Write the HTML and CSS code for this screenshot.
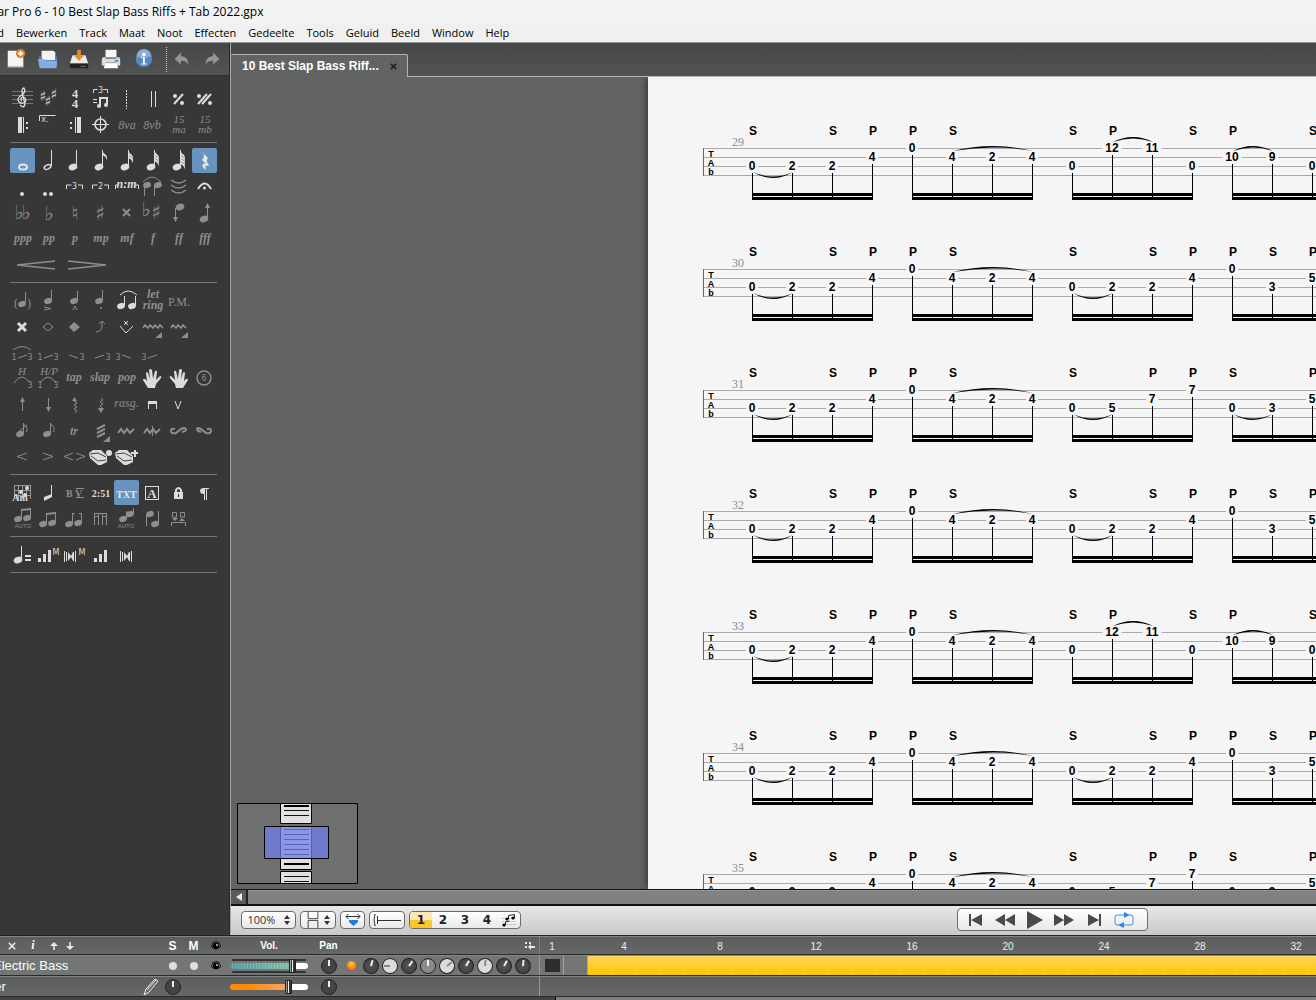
FILE: index.html
```html
<!DOCTYPE html>
<html lang="nl">
<head>
  <meta charset="UTF-8" />
  <meta name="viewport" content="width=device-width, initial-scale=1.0"/>
  <title>Guitar Pro 6 - 10 Best Slap Bass Riffs + Tab 2022.gpx</title>
  <link rel="stylesheet" href="styles.css">
</head>
<body>
  <header class="title-bar">Guitar Pro 6 - 10 Best Slap Bass Riffs + Tab 2022.gpx</header>

  <nav class="menu-bar">
    <a href="#">Bestand</a>
    <a href="#">Bewerken</a>
    <a href="#">Track</a>
    <a href="#">Maat</a>
    <a href="#">Noot</a>
    <a href="#">Effecten</a>
    <a href="#">Gedeelte</a>
    <a href="#">Tools</a>
    <a href="#">Geluid</a>
    <a href="#">Beeld</a>
    <a href="#">Window</a>
    <a href="#">Help</a>
  </nav>

  <main class="workspace">
    <!-- Left side: file toolbar and note palette -->
    <aside class="side">
      <div class="toolbar">
        <button aria-label="New">
          <svg viewBox="0 0 24 24"><path d="M3 3h17v18H3z" fill="#f4f4f4"/><path d="M3 20h17v1H3z" fill="#aaa"/><circle cx="17" cy="6" r="5" fill="#e07b26"/><path d="M17 3v6M14 6h6" stroke="#fff" stroke-width="2"/></svg>
        </button>
        <button aria-label="Open">
          <svg viewBox="0 0 24 24"><path d="M5 3h13l2 2v9H5z" fill="#f2f2f2"/><path d="M2 9h3v4h15V9h2v12H3z" fill="#4f7db8"/><path d="M1 12h7l2 2h12l-1 8H3z" fill="#86ade0"/></svg>
        </button>
        <button aria-label="Save">
          <svg viewBox="0 0 24 24"><path d="M5 8h14l3 9H2z" fill="#ececec"/><path d="M2 17h20v5H2z" fill="#222"/><path d="M14 20h1M16 20h1M18 20h1" stroke="#ddd"/><path d="M10 2h4v6h4l-6 6-6-6h4z" fill="#e88a2e"/></svg>
        </button>
        <button aria-label="Print">
          <svg viewBox="0 0 24 24"><path d="M6 2h12v9H6z" fill="#f7f7f7"/><path d="M3 10h18l1 2v7H2v-7z" fill="#dcdcdc"/><path d="M6 10h12v2H6z" fill="#888"/><path d="M6 16h12l2 6H4z" fill="#fff"/><path d="M6 16h12" stroke="#999"/><path d="M16 14h4" stroke="#3aa0e0" stroke-width="2"/></svg>
        </button>
        <button aria-label="Info">
          <svg viewBox="0 0 24 24"><circle cx="13" cy="12" r="9" fill="#5788bf"/><path d="M5 9a8 8 0 0 1 16 0q-8 4-16 0z" fill="#86aed8"/><circle cx="13" cy="7" r="2" fill="#fff"/><path d="M10 10h4v7h2v1h-6v-1h2v-6h-2z" fill="#fff"/></svg>
        </button>
        <span class="divider"></span>
        <button aria-label="Undo">
          <svg viewBox="0 0 24 24"><path d="M5 12l7-7v4c6 0 8 4 8 9-2-3-4-4-8-4v4z" fill="#949494"/></svg>
        </button>
        <button aria-label="Redo">
          <svg viewBox="0 0 24 24"><path d="M19 12l-7-7v4c-6 0-8 4-8 9 2-3 4-4 8-4v4z" fill="#949494"/></svg>
        </button>
      </div>
      <div class="palette" id="palette"></div>
    </aside>

    <!-- Right side: document tab, score and transport -->
    <section class="document">
      <div class="tabs">
        <div class="tab">10 Best Slap Bass Riff... <button class="tab-close" aria-label="Close"><svg viewBox="0 0 8 8"><path d="M1 1l6 6M7 1l-6 6"/></svg></button></div>
        <div class="tab-rest"></div>
      </div>

      <div class="canvas">
        <div class="sheet" id="score"></div>
        <svg class="navigator" viewBox="0 0 121 81">
          <path d="M.5.5h120v80H.5z" fill="#6f7170" stroke="#000"/>
          <path d="M43.500.5h31v20h-31zM43.500 23.500h31v43h-31zM43.500 68.500h31v12h-31z" fill="#e0e0e0" stroke="#000"/>
          <path d="M47 7.500h25M47 12.500h25M47 26.500h25M47 31.500h25M47 36.500h25M47 41.500h25M47 46.500h25M47 51.500h25M47 73.500h25M47 78.500h25" stroke="#111"/>
          <path d="M47 3h25M47 61h25" stroke="#000" stroke-width="2"/>
          <path d="M27.500 23.500h64v32h-64z" fill="#707de8" fill-opacity=".75" stroke="#000"/>
        </svg>
      </div>

      <div class="scroll">
        <button class="scroll-left" aria-label="Scroll left"><svg viewBox="0 0 8 8"><path d="M7 0v8L1 4z"/></svg></button>
        <div class="scroll-thumb"></div>
      </div>

      <div class="controls">
        <span class="box zoom">
          <select aria-label="Zoom"><option>100%</option><option>150%</option></select>
          <svg class="updown" viewBox="0 0 6 10"><path d="M3 0l3 4H0zM3 10l3-4H0z"/></svg>
        </span>
        <button class="box layout" aria-label="Page layout">
          <svg viewBox="0 0 14 18"><path d="M1.500 0v7.500h11V0M1.500 18V9.500h11V18" fill="none" stroke="#333"/></svg>
          <svg class="updown" viewBox="0 0 6 10"><path d="M3 0l3 4H0zM3 10l3-4H0z"/></svg>
        </button>
        <button class="box fit" aria-label="Fit width">
          <svg viewBox="0 0 16 14"><path d="M1 3.500h14M3.500 1L1 3.500 3.500 6M12.500 1L15 3.500 12.500 6" fill="none" stroke="#333"/><path d="M4 7h9v2l-4.500 4L4 9z" fill="#1a7fe8"/></svg>
        </button>
        <button class="box fret" aria-label="Fretboard">
          <svg viewBox="0 0 30 12"><path d="M4 0H3Q1 6 3 12h1M5.500 2v8M5 6.500h24" fill="none" stroke="#333"/></svg>
        </button>
        <div class="box voices">
          <button class="current">1</button>
          <button>2</button>
          <button>3</button>
          <button>4</button>
          <button aria-label="All voices">
            <svg viewBox="0 0 14 14"><path d="M0 5.500h14M0 8.500h14M0 11.500h14" stroke="#ccc"/><path d="M6.500 6V2.500l6-1V5M3.500 12V9l4-1" fill="none" stroke="#222"/><circle cx="5" cy="6" r="1.600"/><circle cx="11" cy="5" r="1.600"/><circle cx="2" cy="12" r="1.600"/></svg>
          </button>
        </div>
        <div class="box transport">
          <button aria-label="First"><svg viewBox="0 0 20 20"><path d="M4 4h2v12H4zM17 4v12L6 10z"/></svg></button>
          <button aria-label="Rewind"><svg viewBox="0 0 20 20"><path d="M10 4v12L0 10zM20 4v12l-10-6z"/></svg></button>
          <button aria-label="Play"><svg viewBox="0 0 20 20"><path d="M2 1l16 9-16 9z"/></svg></button>
          <button aria-label="Forward"><svg viewBox="0 0 20 20"><path d="M0 4v12l10-6zM10 4v12l10-6z"/></svg></button>
          <button aria-label="Last"><svg viewBox="0 0 20 20"><path d="M17 4h-2v12h2zM4 4v12l11-6z"/></svg></button>
          <button aria-label="Loop"><svg viewBox="0 0 20 20"><path d="M11 5H3q-2 0-2 2v6q0 2 2 2h2M9 15h8q2 0 2-2V7q0-2-2-2h-2" fill="none" stroke="#3d94dc"/><path d="M10 2l6 3-6 3zM10 12l-6 3 6 3z" fill="#2a8ae0"/></svg></button>
        </div>
      </div>
    </section>
  </main>

  <!-- Mixer and timeline -->
  <footer class="mixer">
    <div class="strip head">
      <div class="channel">
        <span class="name head-tools">
          <button aria-label="Add track">+</button>
          <button aria-label="Remove track"><svg viewBox="0 0 10 10"><path d="M1 1l8 8M9 1L1 9" stroke="#e8e8e8" stroke-width="2"/></svg></button>
          <button aria-label="Track info" class="info">i</button>
          <button aria-label="Move up"><svg viewBox="0 0 10 10"><path d="M5 0l5 5H6v5H4V5H0z" fill="#e8e8e8"/></svg></button>
          <button aria-label="Move down"><svg viewBox="0 0 10 10"><path d="M5 10l5-5H6V0H4v5H0z" fill="#e8e8e8"/></svg></button>
        </span>
        <b class="slot sm">S</b>
        <b class="slot sm">M</b>
        <span class="slot eye-slot"><svg class="eye" viewBox="0 0 12 10"><path d="M1 5q5-6 10 0-5 6-10 0zM2 2q4-3 8 0" fill="none" stroke="#111"/><circle cx="6" cy="5" r="3"/><circle cx="7" cy="4" r="1" fill="#ccc"/></svg></span>
        <b class="volume">Vol.</b>
        <b class="pan">Pan</b>
        <svg class="view" viewBox="0 0 12 8"><path d="M1 0h2v2H1zM5 0h2v2H5zM1 4h2v2H1zM4 5l3-3v2h4v2H7v2z" fill="#e8e8e8"/></svg>
      </div>
      <div class="timeline" id="ruler"></div>
    </div>

    <div class="strip selected">
      <div class="channel">
        <span class="name electric">Electric Bass</span>
        <span class="slot"><input type="checkbox" aria-label="Solo"></span>
        <span class="slot"><input type="checkbox" aria-label="Mute"></span>
        <span class="slot eye-slot"><svg class="eye" viewBox="0 0 12 10"><path d="M1 5q5-6 10 0-5 6-10 0zM2 2q4-3 8 0" fill="none" stroke="#111"/><circle cx="6" cy="5" r="3"/><circle cx="7" cy="4" r="1" fill="#ccc"/></svg></span>
        <span class="volume"><input type="range" class="green" aria-label="Volume" value="83"></span>
        <span class="pan"><button class="knob" aria-label="Pan"></button></span>
        <span class="led"></span>
        <span class="effects" id="effects"></span>
      </div>
      <div class="timeline" id="blocks"></div>
    </div>

    <div class="strip">
      <div class="channel">
        <span class="name master">Master</span>
        <svg class="pencil" viewBox="0 0 16 18"><path d="M1 17l2-6L12 1l3 2-9 11zM4 12l9-10" fill="none" stroke="#eee"/></svg>
        <span class="slot"><button class="knob" aria-label="Tuning"></button></span>
        <span class="slot"></span>
        <span class="slot eye-slot"></span>
        <span class="volume"><input type="range" class="orange" aria-label="Master volume" value="78"></span>
        <span class="pan"><button class="knob" aria-label="Master pan"></button></span>
      </div>
      <div class="timeline"></div>
    </div>
    <div class="mixer-scroll"><div class="mixer-thumb"></div></div>
  </footer>

  <script src="script.js"></script>
</body>
</html>
```
FILE: styles.css
```css
* {
  box-sizing: border-box;
}

body {
  margin: 0;
  height: 100vh;
  display: flex;
  flex-direction: column;
  overflow: hidden;
  background: #373737;
  color: #000;
  font-family: "Liberation Sans", Arial, sans-serif;
  font-size: 12px;
}

button {
  display: flex;
  align-items: center;
  justify-content: center;
  padding: 0;
  border: 0;
  background: none;
  color: inherit;
  font: inherit;
}

svg {
  display: block;
}

/* window title and menu */
.title-bar {
  height: 24px;
  flex: none;
  margin-left: -26px;
  background: #f3f3f3;
  font-family: "Open Sans", sans-serif;
  font-size: 12px;
  line-height: 24px;
  white-space: nowrap;
}

.menu-bar {
  display: flex;
  gap: 12px;
  height: 19px;
  flex: none;
  padding-left: 3px;
  background: #f0f0f0;
  border-bottom: 1px solid #8f9190;
  font-family: "Open Sans", sans-serif;
  font-size: 11px;
  line-height: 18px;
}

.menu-bar a {
  color: #000;
  text-decoration: none;
}

.menu-bar a:first-child {
  margin-left: -41px;
}

.workspace {
  flex: 1;
  min-height: 0;
  display: flex;
}

/* left side */
.side {
  width: 230px;
  flex: none;
  background: #373737;
  border-right: 1px solid #2a2a2a;
}

.toolbar {
  display: flex;
  align-items: center;
  height: 33px;
  background: linear-gradient(#464847, #525453);
  border-bottom: 1px solid #333;
}

.toolbar button {
  width: 32px;
}

.toolbar svg {
  width: 22px;
  height: 22px;
}

.divider {
  height: 25px;
  margin-left: 7px;
  margin-right: -1px;
  border-left: 1px dotted #ccc;
}

.palette {
  padding: 5px 12px 0 10px;
}

.group {
  padding: 5px 0 4px;
  border-bottom: 1px solid #777;
}

.row {
  display: flex;
  height: 26px;
}

.tool {
  width: 26px;
  height: 26px;
  flex: none;
  border-radius: 2px;
  color: #8e8e8e;
}

.tool svg {
  width: 26px;
  height: 26px;
  flex: none;
  overflow: visible;
  fill: currentColor;
}

.tool.wide,
.tool.wide svg {
  width: 52px;
}

.tool.lit {
  color: #dcdcdc;
}

.tool.active {
  width: 25px;
  height: 25px;
  margin-right: 1px;
  color: #e6e6e6;
  background: #6893bf;
}

.line {
  fill: none;
  stroke: currentColor;
  stroke-width: 1;
}

.bold-line {
  fill: none;
  stroke: currentColor;
  stroke-width: 2;
}

.tool text {
  text-anchor: middle;
  font-family: "Liberation Serif", serif;
}

.tool .tiny {
  font-family: "DejaVu Sans", sans-serif;
  font-size: 8px;
}

.tool .auto {
  font-family: "Liberation Sans", sans-serif;
  font-size: 6px;
}

.tool .term {
  font-size: 12px;
  font-style: italic;
}

.tool .stack {
  font-size: 11px;
  font-style: italic;
}

.tool .dyn {
  font-size: 12px;
  font-style: italic;
  font-weight: bold;
}

.tool .plain {
  font-size: 12px;
}

.tool .serif {
  font-size: 10px;
  font-weight: bold;
}

.tool .meter {
  font-size: 13px;
  font-weight: bold;
}

.tool .sign {
  font-family: "DejaVu Sans", sans-serif;
  font-size: 20px;
}

.tool .sign.small {
  font-size: 14px;
  font-weight: bold;
}

/* document */
.document {
  flex: 1;
  min-width: 0;
  display: flex;
  flex-direction: column;
  border-left: 1px solid #a8aaa9;
}

.tabs {
  display: flex;
  height: 34px;
  padding-top: 11px;
  background: linear-gradient(#464847, #525453);
  flex: none;
}

.tab {
  display: flex;
  align-items: center;
  gap: 11px;
  width: 177px;
  padding-left: 11px;
  border: 1px solid #b4b6b5;
  border-width: 1px 1px 0 0;
  border-radius: 2px 2px 0 0;
  background: #626463;
  color: #fff;
  font-weight: bold;
  white-space: nowrap;
}

.tab-rest {
  flex: 1;
  border-bottom: 1px solid #b4b6b5;
}

.tab-close svg {
  width: 7px;
  height: 7px;
  stroke: #222;
  stroke-width: 2;
}

.canvas {
  position: relative;
  flex: 1;
  min-height: 0;
  overflow: hidden;
  background: #626463;
}

.sheet {
  height: 100%;
  margin-left: 417px;
  padding: 41px 0 0 55px;
  overflow: hidden;
  background: #f5f5f5;
  box-shadow: 0 0 8px #222;
}

.system {
  width: 100%;
  height: 121px;
  overflow: visible;
}

.staff {
  stroke: #aaa;
}

.edge {
  stroke: #666;
}

.stem {
  stroke: #000;
}

.gap {
  fill: #f5f5f5;
}

.fret-number,
.finger {
  font-family: "Liberation Sans", Arial, sans-serif;
  font-size: 12px;
  font-weight: bold;
  text-anchor: middle;
}

.tab-sign {
  font-size: 9px;
  font-weight: bold;
  text-anchor: middle;
}

.bar-number {
  font-family: "Liberation Serif", serif;
  font-size: 12px;
  text-anchor: end;
  fill: #8c8c8c;
}

.bar-number.here {
  fill: #7482ae;
}

.navigator {
  position: absolute;
  left: 6px;
  bottom: 5px;
  width: 121px;
  height: 81px;
}

.scroll {
  display: flex;
  height: 17px;
  flex: none;
  border: 1px solid #111;
  border-width: 1px 0 2px;
  background: #4e504f;
}

.scroll-left {
  width: 17px;
  border-right: 2px solid #222;
  background: #5a5c5b;
}

.scroll-left svg {
  width: 8px;
  height: 8px;
  fill: #eee;
}

.scroll-thumb {
  flex: 1;
  background: #808281;
  border-top: 1px solid #959796;
}

.controls {
  display: flex;
  align-items: center;
  gap: 4px;
  height: 29px;
  flex: none;
  padding: 0 0 2px 10px;
  background: linear-gradient(#e8e8e8, #c8c8c8);
}

.box {
  display: flex;
  align-items: center;
  justify-content: center;
  height: 18px;
  border: 1px solid #6c6c6c;
  border-radius: 4px;
  background: linear-gradient(#fff, #e8e8e8);
}

.updown {
  width: 6px;
  height: 10px;
  fill: #333;
}

.zoom {
  width: 55px;
  gap: 4px;
}

.zoom select {
  appearance: none;
  width: 32px;
  padding: 0;
  border: 0;
  background: none;
  color: #333;
  font-family: "Open Sans", sans-serif;
  font-size: 11px;
  line-height: 14px;
}

.layout {
  width: 36px;
  gap: 4px;
}

.layout svg:first-child {
  width: 14px;
  height: 16px;
}

.fit {
  width: 25px;
}

.fit svg {
  width: 16px;
  height: 14px;
}

.fret {
  width: 36px;
}

.fret svg {
  width: 30px;
  height: 12px;
}

.voices {
  width: 112px;
  overflow: hidden;
}

.voices button {
  flex: 1;
  height: 100%;
  color: #222;
  font-family: "DejaVu Sans", sans-serif;
  font-size: 12px;
  font-weight: bold;
}

.voices .current {
  background: linear-gradient(#fde6b8 50%, #fdc52c 50%);
}

.voices svg {
  width: 14px;
  height: 14px;
}

.transport {
  width: 191px;
  height: 23px;
  margin-left: 432px;
  padding: 0 8px 0 2px;
}

.transport button {
  flex: 1;
}

.transport svg {
  width: 20px;
  height: 20px;
  fill: #4a4a4a;
}

/* mixer */
.mixer {
  flex: none;
  background: #3c3c3c;
  border-top: 1px solid #222;
}

.strip {
  display: flex;
  height: 21px;
  border-top: 1px solid #858585;
  border-bottom: 1px solid #2a2a2a;
  background: linear-gradient(#5c5e5d, #666867);
}

.strip.head {
  height: 19px;
}

.strip.selected {
  background: #747675;
}

.channel {
  display: flex;
  align-items: center;
  width: 540px;
  flex: none;
  border-right: 1px solid #999;
  color: #fff;
}

.head .channel {
  border-right-style: dotted;
  font-size: 10px;
}

.name {
  width: 162px;
  flex: none;
  font-size: 12px;
  white-space: nowrap;
}

.electric {
  font-size: 13px;
  text-indent: -7px;
}

.master {
  width: 143px;
  font-size: 13px;
  text-indent: -34px;
}

.head-tools {
  display: flex;
  align-items: center;
  gap: 6px;
  padding-right: 80px;
  margin-left: -9px;
  width: 171px;
}

.head-tools button {
  width: 10px;
}

.head-tools .info {
  width: 20px;
  font-family: "Liberation Serif", serif;
  font-style: italic;
  font-weight: bold;
}

.head-tools svg {
  width: 8px;
  height: 8px;
}

.slot {
  display: flex;
  justify-content: center;
  width: 21px;
  flex: none;
}

.eye-slot {
  width: 24px;
}

.sm {
  font-size: 12px;
}

.eye {
  width: 12px;
  height: 10px;
}

.pencil {
  width: 16px;
  height: 18px;
  margin-right: 3px;
}

.volume {
  display: flex;
  justify-content: center;
  width: 82px;
  flex: none;
}

.pan {
  display: flex;
  justify-content: center;
  width: 37px;
  flex: none;
}

.view {
  width: 12px;
  height: 8px;
  margin-left: auto;
  margin-right: 3px;
}

input[type="checkbox"] {
  appearance: none;
  width: 8px;
  height: 8px;
  margin: 0;
  border-radius: 50%;
  background: #dedede;
}

input[type="range"] {
  appearance: none;
  width: 78px;
  height: 6px;
  margin: 0;
  border-radius: 3px;
}

input[type="range"]::-webkit-slider-thumb {
  appearance: none;
  width: 7px;
  height: 14px;
  border: 1px solid #222;
  border-radius: 1px;
  background: linear-gradient(90deg, #999 1px, #333 1px, #333 2px, #eee 2px, #eee 3px, #333 3px);
}

.green {
  background: repeating-linear-gradient(90deg, transparent 0 2px, #ffffff33 2px 3px), linear-gradient(90deg, #4f98a0, #7cbfa2 80%, #fff 80%);
  box-shadow: 0 -6px 0 -2px #333, 0 6px 0 -2px #333;
}

.orange {
  background: linear-gradient(90deg, #ff8a00 20%, #f5a56a 76%, #fff 76%);
}

.knob {
  width: 16px;
  height: 16px;
  border: 1px solid #222;
  border-radius: 50%;
  background: #444;
  transform: rotate(var(--turn, 0deg));
}

.knob::after {
  content: "";
  width: 2px;
  height: 6px;
  margin-bottom: 6px;
  background: #eee;
}

.effects .knob {
  background: radial-gradient(#555, #3c3c3c);
}

.effects .knob.white {
  background: #dcdcdc;
}

.effects .knob.white::after {
  background: #888;
}

.effects .knob.gray {
  background: #8a8a8a;
}

.led {
  width: 9px;
  height: 9px;
  margin-right: 7px;
  border-radius: 50%;
  background: radial-gradient(circle at 50% 30%, #ffc040, #f06000);
}

.effects {
  display: flex;
  gap: 3px;
}

.timeline {
  display: flex;
  flex: 1;
  min-width: 0;
  overflow: hidden;
}

.measure {
  width: 24px;
  flex: none;
  color: #eee;
  font-size: 10px;
  line-height: 19px;
  text-align: center;
}

.block {
  width: 24px;
  flex: none;
  border-right: 1px solid #dfcf98;
  background: linear-gradient(#fbd75c, #fcc600);
}

.block.empty {
  border-right-color: #a2a2a2;
  background: none;
}

.block.first::before {
  content: "";
  display: block;
  width: 15px;
  height: 13px;
  margin: 3px 0 0 5px;
  background: #2c2c2c;
}

.mixer-scroll {
  height: 3px;
  padding-left: 555px;
  background: #444;
}

.mixer-thumb {
  height: 3px;
  background: #808080;
  border-left: 1px solid #000;
}
```
FILE: script.js
```javascript
// ---------- palette icons (26 x 26 grid) ----------
const line = (d) => `<path class="line" d="${d}"/>`;
const bold = (d) => `<path class="bold-line" d="${d}"/>`;
const fill = (d) => `<path d="${d}"/>`;
const text = (x, y, s, cls) => `<text x="${x}" y="${y}" class="${cls}">${s}</text>`;
const dot = (x, y, r = 1.5) => `<circle cx="${x}" cy="${y}" r="${r}"/>`;
const head = (x, y) => `<ellipse cx="${x}" cy="${y}" rx="4.4" ry="3.2" transform="rotate(-20 ${x} ${y})"/>`;
const small = (x, y) => `<ellipse cx="${x}" cy="${y}" rx="4" ry="3" transform="rotate(-20 ${x} ${y})"/>`;

function note(x, y, length, flags = 0) {
  let out = head(x, y) + line(`M${x + 3.5} ${y - 1}V${y - length}`);
  for (let i = 0; i < flags; i++) {
    const top = y - length + i * 3;
    out += fill(`M${x + 3} ${top}q1 3 4 5q2 3 0 5q1-3-4-5z`);
  }
  return out;
}

const smallNote = (x, y, length) => small(x, y) + line(`M${x + 3.5} ${y - 1}V${y - length}`);
const beamed = (x, y) => small(x, y) + small(x + 9, y - 1) + line(`M${x + 3.5} ${y}v-10M${x + 12.5} ${y - 1}v-10`);
const tuplet = (s) => line("M4.500 15v-4h5M16 11h4.500v4") + text(12.5, 15, s, "tiny");
const hand = fill("M8 22l-5-8q0-2 2-1l2 2-1-8q1-2 2 0l2 6-1-9q1-2 3 0l1 9 2-8q2-1 2 1l-1 8 4-4q2 0 1 2l-5 6-1 4z");
const corner = fill("M22 18v6h-7z");
const pedal = fill("M1 9l4-3h8l6 6v6l-6 3h-3L2 14z") + `<path d="M2 10l8-1 8 4M3 12l7 5 8-1" fill="none" stroke="#444"/>`;
const bars = fill("M6 18h3v4H6zM11 14h3v8h-3zM16 10h3v12h-3z");
const tuner = line("M6.500 9v11M8.500 10v9M17.500 9v11M15.500 10v9") + fill("M10 10l3 4 2-4v9l-2-4-3 4z");
const zig = (x, n) => `<path d="M${x} 14${"l2-3l3 3".repeat(n)}" fill="none" stroke="currentColor" stroke-width="1.5"/>`;

const groups = [
  [
    [
      ["Clef", "lit", `<path d="M2 5.500h21M2 9.500h21M2 13.500h21M2 17.500h21" stroke="#777"/>` + `<path d="M10 19q4 4 5-1L12 6q0-4 2-4q2 3-1 6q-5 3-5 6q1 4 6 3q3-2 1-5q-3-2-4 1q0 2 1 2" fill="none" stroke="currentColor" stroke-width="1.300"/>`],
      ["Key signature", "lit", text(7, 15, "♯", "sign small") + text(12, 20, "♯", "sign small") + text(18, 13, "♯", "sign small")],
      ["Time signature", "lit", text(13, 12, "4", "meter") + text(13, 22, "4", "meter")],
      ["Triplet feel", "lit", line("M5.500 7V3.500h4M15 3.500h4.500V7M5 13.500h4M5 16.500h4") + text(12.5, 7, "3", "tiny") + bold("M12 20v-8h7v7") + dot(11, 20, 2) + dot(18, 19, 2)],
      ["Free time", "lit", `<path d="M12.500 4v19" stroke="currentColor" stroke-dasharray="2 1"/>`],
      ["Double bar", "lit", line("M11.500 5v16M15.500 5v16")],
      ["Simile", "lit", bold("M8 18l9-10") + dot(9, 10, 2) + dot(16, 17, 2)],
      ["Double simile", "lit", bold("M6 18l9-10M10 18l9-10") + dot(7, 10, 2) + dot(18, 17, 2)]
    ],
    [
      ["Repeat open", "lit", fill("M8 5h4v16H8zM13 5h1v16h-1zM16 10h2v2h-2zM16 15h2v2h-2z")],
      ["Alternate ending", "lit", line("M3.500 9V3.500h16") + text(9, 10, "x.", "tiny")],
      ["Repeat close", "lit", fill("M8 10h2v2H8zM8 15h2v2H8zM13 5h1v16h-1zM15 5h4v16h-4z")],
      ["Coda", "lit", `<circle cx="12.500" cy="12.500" r="5.500" fill="none" stroke="currentColor" stroke-width="1.600"/>` + line("M12.500 4v17M4 12.500h17")],
      ["8va", "", text(13, 17, "8va", "term")],
      ["8vb", "", text(12, 17, "8vb", "term")],
      ["15ma", "", text(13, 11, "15", "stack") + text(13, 21, "ma", "stack")],
      ["15mb", "", text(13, 11, "15", "stack") + text(13, 21, "mb", "stack")]
    ]
  ],
  [
    [
      ["Whole", "active", `<ellipse cx="13" cy="19" rx="4" ry="2.500" fill="none" stroke="currentColor" stroke-width="2"/>`],
      ["Half", "lit", `<ellipse cx="11.500" cy="19" rx="3.500" ry="2" fill="none" stroke="currentColor" stroke-width="1.500" transform="rotate(-25 11.500 19)"/>` + line("M15.500 18V2")],
      ["Quarter", "lit", note(11, 19, 17)],
      ["Eighth", "lit", note(11, 19, 17, 1)],
      ["Sixteenth", "lit", note(11, 19, 17, 2)],
      ["Thirty-second", "lit", note(11, 19, 17, 3)],
      ["Sixty-fourth", "lit", note(11, 19, 17, 4)],
      ["Rest", "active", fill("M10 4l6 6q-3 3 1 7l-1 1q-4-2-2 4q-5-3-3-6q1-1 3 0l-4-4q4-4 0-8z")]
    ],
    [
      ["Dotted", "lit", dot(12, 20, 2)],
      ["Double dotted", "lit", dot(9, 20, 2) + dot(15, 20, 2)],
      ["Triplet", "lit", tuplet("3")],
      ["Duplet", "lit", tuplet("2")],
      ["Tuplet", "lit", line("M1.500 15v-4h3M21 11h3.500v4") + text(12.5, 14, "n:m", "dyn")],
      ["Tie", "", small(7, 11) + small(18, 11) + line("M4.500 12v10M14.500 12v10M3 8q9-10 18 0")],
      ["Tie beat", "", `<path d="M5 6q8 6 15 0M5 11q8 6 15 0M5 16q8 6 15 0" fill="none" stroke="currentColor" stroke-width="1.500"/>`],
      ["Fermata", "lit", bold("M6 15q7-11 13 0") + dot(12.5, 14)]
    ],
    [
      ["Double flat", "", text(9, 19, "♭", "sign") + text(16, 19, "♭", "sign")],
      ["Flat", "", text(13, 20, "♭", "sign")],
      ["Natural", "", text(13, 20, "♮", "sign")],
      ["Sharp", "", text(12, 20, "♯", "sign")],
      ["Double sharp", "", bold("M9 9l7 7M16 9l-7 7")],
      ["Enharmonic", "", text(6, 16, "♭", "sign") + text(16, 19, "♯", "sign")],
      ["Semitone down", "", head(14, 7) + line("M9.500 8v12") + fill("M7 17h5l-2.500 5z")],
      ["Semitone up", "", head(12, 19) + line("M15.500 18V5") + fill("M13 8h5l-2.500-5z")]
    ],
    ["ppp", "pp", "p", "mp", "mf", "f", "ff", "fff"].map((s) => [s, "", text(13, 16, s, "dyn")]),
    [
      ["Crescendo", "wide", `<path d="M45 9L7 13l38 4" fill="none" stroke="currentColor" stroke-width="1.500"/>`],
      ["Decrescendo", "wide", `<path d="M6 9l38 4-38 4" fill="none" stroke="currentColor" stroke-width="1.500"/>`]
    ]
  ],
  [
    [
      ["Ghost note", "", smallNote(12, 16, 12) + text(6, 19, "(", "plain") + text(19, 19, ")", "plain")],
      ["Accent", "", smallNote(12, 13, 11) + line("M8 19l7 1.500-7 1.500")],
      ["Heavy accent", "", smallNote(12, 13, 10) + line("M11 22l2-4 2 4")],
      ["Staccato", "", smallNote(11, 13, 11) + dot(13, 20, 1)],
      ["Legato", "lit", small(7, 18) + small(18, 18) + line("M10.500 17V8M21.500 17V8") + line("M6 7q8-8 17 0")],
      ["Let ring", "", text(13, 10, "let", "dyn") + text(13, 21, "ring", "dyn")],
      ["Palm mute", "", text(13, 18, "P.M.", "plain")]
    ],
    [
      ["Dead note", "lit", `<path d="M8 9l8 8M16 9l-8 8" stroke="currentColor" stroke-width="3"/>`],
      ["Natural harmonic", "", line("M7 13l5-4 5 4-5 4z")],
      ["Artificial harmonic", "", fill("M7 13l5-5 6 5-6 5z")],
      ["Bend", "", line("M8 18q7 0 6-10M11 10l3-3 3 3")],
      ["Tremolo bar", "lit", line("M6 12l6 7 7-7M10 7l4 4M14 7l-4 4")],
      ["Vibrato", "", zig(3, 4) + corner],
      ["Wide vibrato", "", zig(5, 3) + corner]
    ],
    [
      ["Legato slide", "", text(4, 20, "1", "tiny") + line("M8 18l9-3M3 10q9-7 18 0") + text(20, 20, "3", "tiny")],
      ["Shift slide", "", text(4, 20, "1", "tiny") + line("M8 18l9-3") + text(20, 20, "3", "tiny")],
      ["Slide in above", "", line("M7 15l9 3") + text(20, 20, "3", "tiny")],
      ["Slide in below", "", line("M7 18l9-3") + text(20, 20, "3", "tiny")],
      ["Slide out down", "", text(4, 20, "3", "tiny") + line("M8 15l9 3")],
      ["Slide out up", "", text(4, 20, "3", "tiny") + line("M8 18l9-3")]
    ],
    [
      ["Hammer on", "", text(12, 9, "H", "stack") + line("M4 17q8-12 16 0") + text(20, 22, "3", "tiny")],
      ["Pull off", "", text(13, 9, "H/P", "stack") + line("M4 17q8-12 16 0") + text(4, 22, "1", "tiny") + text(20, 22, "3", "tiny")],
      ["Tap", "", text(12, 15, "tap", "dyn")],
      ["Slap", "", text(12, 15, "slap", "dyn")],
      ["Pop", "", text(13, 15, "pop", "dyn")],
      ["Left hand", "lit", hand],
      ["Right hand", "lit", `<g transform="translate(25 0) scale(-1 1)">${hand}</g>`],
      ["String number", "", `<circle cx="12" cy="12" r="7" fill="none" stroke="currentColor" stroke-width="1.500"/>` + text(12, 15, "6", "tiny")]
    ],
    [
      ["Upstroke", "", line("M12.500 19V7") + fill("M10 10h5l-2.500-5z")],
      ["Downstroke", "", line("M12.500 6v12") + fill("M10 15h5l-2.500 5z")],
      ["Arpeggio up", "", line("M13 21l2-2-3-2 3-2-3-2 3-2-3-2V7") + fill("M10 9h5l-2.500-4z")],
      ["Arpeggio down", "", line("M13 6l2 2-3 2 3 2-3 2 2 2") + fill("M10 16h6l-3 5z")],
      ["Rasgueado", "", text(12.5, 15, "rasg.", "term")],
      ["Pick down", "lit", fill("M8 9h9v8h-1v-5H9v5H8z")],
      ["Pick up", "lit", line("M9 9l3 8 3-8")]
    ],
    [
      ["Grace before", "", smallNote(10, 16, 11) + line("M13.500 6q5 3 3 8M7 15L17 7")],
      ["Grace on beat", "", smallNote(11, 16, 11) + line("M14.500 6q5 3 3 8")],
      ["Trill", "", text(12, 17, "tr", "dyn")],
      ["Tremolo picking", "", bold("M9 11l8-4M9 15l8-4M9 19l8-4") + corner],
      ["Mordent", "", bold("M4 15l3-4 3 4 3-4 3 4 4-4")],
      ["Inverted mordent", "", bold("M4 15l3-4 3 4 3-4 3 4 4-4") + line("M12.500 8v10")],
      ["Turn", "", bold("M9 11q-4-1-4 2t5 2l5-4q4-2 5 0t-4 3")],
      ["Inverted turn", "", bold("M15 11q4-1 4 2t-5 2l-5-4q-4-2-4 0t4 3")]
    ],
    [
      ["Fade in", "", line("M17 9L7 12.500 17 16")],
      ["Fade out", "", line("M7 9l10 3.500L7 16")],
      ["Swell", "", line("M11 9l-9 3.500 9 3.500M14 9l9 3.500-9 3.500")],
      ["Wah open", "lit", pedal + dot(21, 9, 3)],
      ["Wah closed", "lit", pedal + bold("M21 6v7M17 9h7")]
    ]
  ],
  [
    [
      ["Chord", "lit", `<path d="M4.500 5v14M8.500 5v14M12.500 5v14M16.500 5v14M20.500 5v14M4 5.500h17M4 10.500h17M4 15.500h17" stroke="#999"/>` + dot(17, 8, 2) + dot(11, 12, 2) + dot(15, 15, 2) + text(10, 21, "Am", "serif")],
      ["Slash", "lit", fill("M8 17l8-3v3l-8 4z") + line("M15.500 15V5")],
      ["Barre", "", text(12, 17, "B V", "serif") + line("M14 8.500h8M14 17.500h8")],
      ["Timer", "lit", text(13, 17, "2:51", "serif")],
      ["Text", "active", text(12.5, 18, "TXT", "serif")],
      ["Section", "lit", `<rect x="5.500" y="6.500" width="13" height="13" fill="none" stroke="currentColor"/>` + text(12, 18, "A", "meter")],
      ["Lock", "lit", fill("M8 12h9v7H8z") + bold("M10 13v-3q2-4 5 0v3") + `<path d="M12 14h1v3h-1z" fill="#333"/>`],
      ["Paragraph", "lit", fill("M17 8h-5q-4 0-4 3t4 3v6h1V9h1v11h1V9h2z")]
    ],
    [
      ["Auto beam", "", beamed(8, 13) + bold("M11 4l10-1") + text(13, 22, "AUTO", "auto")],
      ["Beam all", "", beamed(7, 18) + bold("M10 8l10-1")],
      ["Break beam", "", beamed(7, 18) + line("M10 7.500h3M17 7.500h3")],
      ["Break secondary", "", line("M6.500 19V7M10.500 19V7M14.500 19V7M18.500 19V7") + line("M6 7.500h13M6 10.500h5M14 10.500h5")],
      ["Auto stem", "", small(9, 13) + small(16, 8) + line("M12.500 13V5M19.500 2v6") + text(12, 22, "AUTO", "auto")],
      ["Invert stem", "", small(10, 8) + small(15, 18) + line("M6.500 9v11M18.500 17V5")],
      ["Beam layout", "", line("M6.500 11V6.500h4V11zM14.500 11V6.500h4V11zM5.500 20v-3.500h14V20") + fill("M6 12h6l-3 3zM13 15h6l-3-3z")]
    ]
  ],
  [
    [
      ["Tempo", "lit", note(8, 18, 14) + bold("M15 14h6M15 18h6")],
      ["Volume automation", "lit", `<g transform="translate(-4 -2)">${bars}</g>` + text(20, 13, "M", "tiny")],
      ["Pan automation", "lit", `<g transform="translate(-4 0)">${tuner}</g>` + text(20, 13, "M", "tiny")],
      ["Master volume", "lit", `<g transform="translate(0 -2)">${bars}</g>`],
      ["Master pan", "lit", tuner]
    ]
  ]
];

document.getElementById("palette").innerHTML = groups.map((rows) =>
  `<div class="group">` + rows.map((row) =>
    `<div class="row">` + row.map(([label, mode, icon]) =>
      `<button class="tool ${mode}" aria-label="${label}"><svg viewBox="0 0 ${mode === "wide" ? 52 : 26} 26">${icon}</svg></button>`
    ).join("") + `</div>`
  ).join("") + `</div>`
).join("");

// ---------- score ----------
// each note: fret, string (0 = top line), slap / pop letter
const start = "0,2,S 2,2 2,2,S 4,1,P 0,0,P 4,1,S 2,1 4,1 ";
const riffs = [
  { notes: start + "0,2,S 12,0,P 11,0 0,2,S 10,1,P 9,1 0,2,S 7,1,P", slurs: [[0, 1, "under"], [5, 7], [9, 10], [12, 13]] },
  { notes: start + "0,2,S 2,2 2,2,S 4,1,P 0,0,P 3,2,S 5,1,P 7,1", slurs: [[0, 1, "under"], [5, 7], [8, 9, "under"]] },
  { notes: start + "0,2,S 5,2 7,1,P 7,0,P 0,2,S 3,2 5,1,P 5,0,P", slurs: [[0, 1, "under"], [5, 7], [8, 9, "under"], [12, 13, "under"]] }
];
const order = [0, 1, 2, 1, 0, 1, 2];
const STEP = 40;
const LEFT = 49;
const TOP = 30;
const GAP = 9;

function drawSystem(riff, number) {
  const notes = riff.notes.split(" ").map((n) => n.split(","));
  const x = (i) => LEFT + i * STEP;
  const y = (s) => TOP + s * GAP;
  let out = "";

  for (let s = 0; s < 4; s++) {
    out += `<path class="staff" d="M0 ${y(s) + 0.5}h1200"/>`;
  }
  out += `<path class="edge" d="M.5 ${TOP}v28"/>`;
  ["T", "A", "b"].forEach((c, i) => {
    out += `<text class="tab-sign" x="8" y="${y(i + 1)}">${c}</text>`;
  });
  out += `<text class="bar-number${number === 33 ? " here" : ""}" x="41" y="${TOP - 2}">${number}</text>`;

  notes.forEach(([fret, string, finger], i) => {
    const w = fret.length * 7 + 5;
    out += `<rect class="gap" x="${x(i) - w / 2}" y="${y(+string) - 5}" width="${w}" height="11"/>`;
    out += `<text class="fret-number" x="${x(i)}" y="${y(+string) + 4}">${fret}</text>`;
    out += `<path class="stem" d="M${x(i) + 0.5} ${y(+string) + 7}V81"/>`;
    if (finger) out += `<text class="finger" x="${x(i) + 1}" y="17">${finger}</text>`;
  });

  for (let i = 0; i < notes.length; i += 4) {
    out += `<path d="M${x(i)} 75h121v3h-121zM${x(i)} 79h121v3h-121z"/>`;
  }

  riff.slurs.forEach(([a, b, under]) => {
    const w = x(b) - x(a);
    const base = under ? y(+notes[a][1]) + 6 : y(+notes[a][1]) - 6;
    const h = under ? 9 : -7;
    const inner = under ? 12 : -10;
    out += `<path d="M${x(a) + 1} ${base}q${w / 2} ${h} ${w} 0q${-w / 2} ${inner} ${-w} 0z"/>`;
  });

  return `<svg class="system">${out}</svg>`;
}

document.getElementById("score").innerHTML = order.map((r, i) => drawSystem(riffs[r], 29 + i)).join("");

// ---------- mixer ----------
const knobs = [[15], [-90, "white"], [35], [0, "gray"], [50, "white"], [30], [5, "white"], [30], [5]];
document.getElementById("effects").innerHTML = knobs.map(([turn, tone = ""]) =>
  `<button class="knob ${tone}" aria-label="Effect" style="--turn: ${turn}deg"></button>`
).join("");

let ruler = "";
let blocks = "";
for (let m = 1; m <= 60; m++) {
  ruler += `<span class="measure">${m === 1 || m % 4 === 0 ? m : ""}</span>`;
  blocks += `<span class="block${m < 3 ? " empty" : ""}${m === 1 ? " first" : ""}"></span>`;
}
document.getElementById("ruler").innerHTML = ruler;
document.getElementById("blocks").innerHTML = blocks;
```
